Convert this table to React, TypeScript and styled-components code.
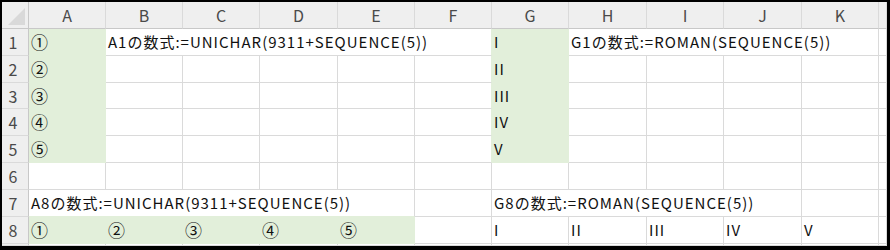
import styled, { createGlobalStyle } from 'styled-components';

const GlobalStyle = createGlobalStyle`
  html, body {
    margin: 0;
    padding: 0;
    background: #fff;
  }
`;

const GREEN = '#e2efda';
const GRID = '#dadada';
const HEAD_LINE = '#c8c8c8';

const colWidths = [77, 77, 77, 78, 77, 77, 77, 78, 77, 78, 77, 8];
const rowHeights = [27, 27, 26, 27, 27, 27, 27, 27, 2];
const colNames = ['A', 'B', 'C', 'D', 'E', 'F', 'G', 'H', 'I', 'J', 'K', ''];

type CellDef = { col: number; text?: string; span?: number; fill?: boolean };

const rows: CellDef[][] = [
  [
    { col: 0, text: '①', fill: true },
    { col: 1, text: 'A1の数式:=UNICHAR(9311+SEQUENCE(5))', span: 5 },
    { col: 6, text: 'I', fill: true },
    { col: 7, text: 'G1の数式:=ROMAN(SEQUENCE(5))', span: 4 },
    { col: 11 },
  ],
  ...['②', '③', '④', '⑤'].map((c, i) => [
    { col: 0, text: c, fill: true },
    { col: 1 }, { col: 2 }, { col: 3 }, { col: 4 }, { col: 5 },
    { col: 6, text: ['II', 'III', 'IV', 'V'][i], fill: true },
    { col: 7 }, { col: 8 }, { col: 9 }, { col: 10 }, { col: 11 },
  ]),
  colNames.map((_, i) => ({ col: i })),
  [
    { col: 0, text: 'A8の数式:=UNICHAR(9311+SEQUENCE(5))', span: 5 },
    { col: 5 },
    { col: 6, text: 'G8の数式:=ROMAN(SEQUENCE(5))', span: 4 },
    { col: 10 },
    { col: 11 },
  ],
  [
    { col: 0, text: '①', fill: true },
    { col: 1, text: '②', fill: true },
    { col: 2, text: '③', fill: true },
    { col: 3, text: '④', fill: true },
    { col: 4, text: '⑤', fill: true },
    { col: 5 },
    { col: 6, text: 'I' },
    { col: 7, text: 'II' },
    { col: 8, text: 'III' },
    { col: 9, text: 'IV' },
    { col: 10, text: 'V' },
    { col: 11 },
  ],
  colNames.map((_, i) => ({ col: i })),
];

const isFilled = (r: number, c: number) => {
  const row = rows[r];
  if (!row) return false;
  return row.some((d) => d.fill && c >= d.col && c < d.col + (d.span ?? 1));
};

// circled digits ①..⑤ render a bit bigger in Excel
const isCircled = (t?: string) => !!t && /^[\u2460-\u2473]$/.test(t);

const Frame = styled.div`
  width: 890px;
  height: 250px;
  box-sizing: border-box;
  border-style: solid;
  border-color: #000;
  border-width: 2px 3px 4px 2px;
  overflow: hidden;
  background: #fff;
`;

const Sheet = styled.div`
  display: grid;
  grid-template-columns: 27px ${colWidths.map((w) => `${w}px`).join(' ')};
  grid-template-rows: 27px ${rowHeights.map((h) => `${h}px`).join(' ')};
  font-family: "Noto Sans CJK JP", sans-serif;
  font-size: 15px;
  line-height: 26px;
`;

const Corner = styled.div`
  position: relative;
  background: #efefef;
  border-right: 1px solid ${HEAD_LINE};
  border-bottom: 1px solid ${HEAD_LINE};
  box-sizing: border-box;
  &::after {
    content: '';
    position: absolute;
    right: 3px;
    bottom: 3px;
    width: 17px;
    height: 17px;
    background: #d9d9d9;
    clip-path: polygon(100% 0, 100% 100%, 0 100%);
  }
`;

const ColHead = styled.div`
  background: #efefef;
  color: #4a4a4a;
  font-size: 16px;
  text-align: center;
  border-right: 1px solid ${GRID};
  border-bottom: 1px solid ${HEAD_LINE};
  box-sizing: border-box;
  overflow: hidden;
`;

const RowHead = styled.div`
  background: #efefef;
  color: #4a4a4a;
  font-size: 16px;
  text-align: center;
  padding-right: 4px;
  border-right: 1px solid ${HEAD_LINE};
  border-bottom: 1px solid ${GRID};
  box-sizing: border-box;
  overflow: hidden;
`;

const Cell = styled.div<{ $fill?: boolean; $circled?: boolean; $right: string; $bottom: string; $span: number }>`
  grid-column: span ${(p) => p.$span};
  background: ${(p) => (p.$fill ? GREEN : '#fff')};
  color: #111;
  font-size: ${(p) => (p.$circled ? '17px' : '15px')};
  padding-left: 2px;
  letter-spacing: 1px;
  white-space: nowrap;
  overflow: hidden;
  box-sizing: border-box;
  border-right: 1px solid ${(p) => p.$right};
  border-bottom: 1px solid ${(p) => p.$bottom};
`;

export default function App() {
  return (
    <>
      <GlobalStyle />
      <Frame>
        <Sheet>
          <Corner />
          {colNames.map((n, i) => (
            <ColHead key={i}>{n}</ColHead>
          ))}
          {rows.map((row, r) => [
            <RowHead key={`h${r}`}>{r < 8 ? r + 1 : ''}</RowHead>,
            ...row.map((d) => {
              const span = d.span ?? 1;
              const last = d.col + span - 1;
              const fill = !!d.fill;
              const rightGreen = fill || isFilled(r, last + 1);
              const bottomGreen = fill || isFilled(r + 1, d.col);
              return (
                <Cell
                  key={`${r}-${d.col}`}
                  $span={span}
                  $fill={fill}
                  $circled={isCircled(d.text)}
                  $right={rightGreen ? GREEN : GRID}
                  $bottom={bottomGreen ? GREEN : GRID}
                >
                  {d.text}
                </Cell>
              );
            }),
          ])}
        </Sheet>
      </Frame>
    </>
  );
}
